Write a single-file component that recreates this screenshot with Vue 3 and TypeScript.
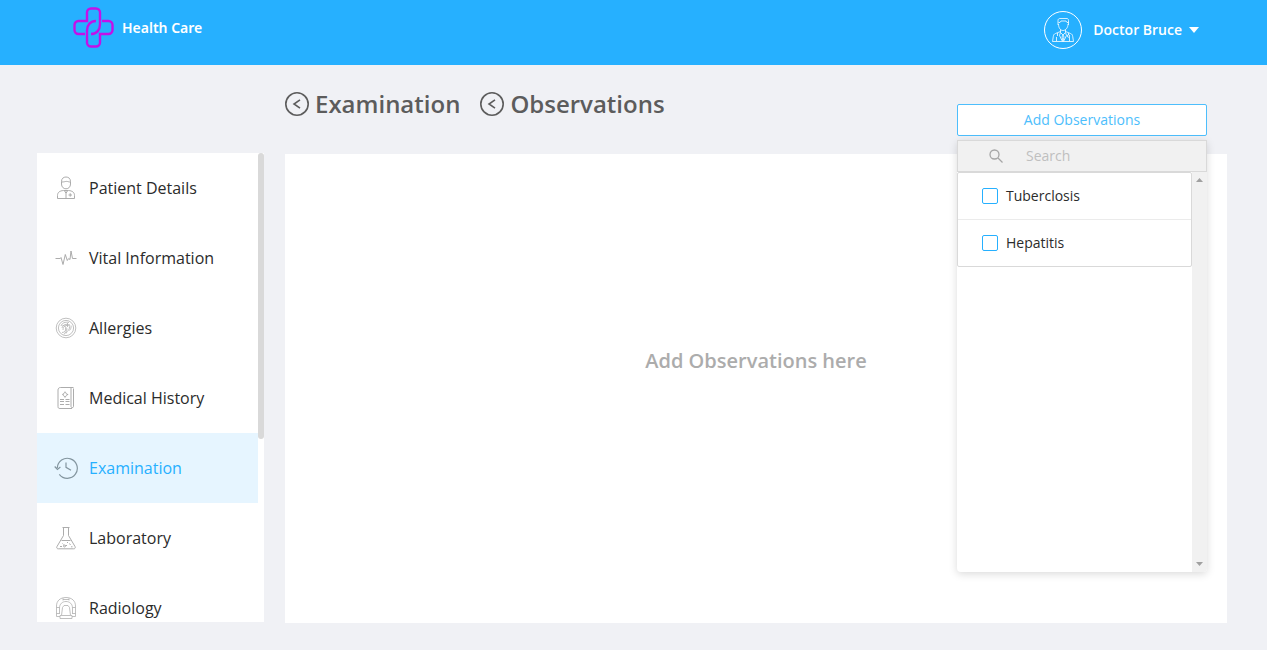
<script setup lang="ts">
import { ref } from 'vue'

interface MenuItem {
  id: string
  label: string
}

const menu: MenuItem[] = [
  { id: 'patient', label: 'Patient Details' },
  { id: 'vital', label: 'Vital Information' },
  { id: 'allergies', label: 'Allergies' },
  { id: 'history', label: 'Medical History' },
  { id: 'examination', label: 'Examination' },
  { id: 'laboratory', label: 'Laboratory' },
  { id: 'radiology', label: 'Radiology' },
]
const active = ref('examination')
const crumbs: string[] = ['Examination', 'Observations']
const observations: string[] = ['Tuberclosis', 'Hepatitis']
const selected = ref<string[]>([])
const search = ref('')
const open = ref(true)
</script>

<template>
  <div class="page">
    <header class="topbar">
      <a class="brand" href="#">
        <svg class="brand-mark" viewBox="0 0 41 41" aria-hidden="true">
          <path d="M12 27H5.500a4 4 0 0 1-4-4V18a4 4 0 0 1 4-4H14V5.500a4 4 0 0 1 4-4h5a4 4 0 0 1 4 4V17.500C27 23 23.500 27 18 27" />
          <path d="M12 27H5.500a4 4 0 0 1-4-4V18a4 4 0 0 1 4-4H14V5.500a4 4 0 0 1 4-4h5a4 4 0 0 1 4 4V17.500C27 23 23.500 27 18 27" transform="rotate(180 20.500 20.500)" />
        </svg>
        <span>Health Care</span>
      </a>
      <button class="user" type="button">
        <svg class="avatar" viewBox="0 0 38 38" aria-hidden="true">
          <circle cx="19" cy="19" r="18.500" />
          <g class="thin">
            <path d="M14 14V9.500c0-1.500 1-2 2-2h7c1 0 1.500 1 1.500 2V14M14.500 11.500h1.500l1-1.500h5l1 1.500h1.500M14.500 13c0 4 2 6.500 4.500 6.500s5-2.500 5-6.500M16.500 18.500v3L19 24l2.500-2.500v-3" />
            <path d="M16.500 20.500l-5 2c-1.500.5-2 1.500-2.200 3L8.500 30.500h21l-.8-5c-.2-1.500-.7-2.500-2.200-3l-5-2M16.500 21.500l-1 3 3 6M21.500 21.500l1 3-3 6M19 24l-1 2 1 4 1-4zM12.500 30v-4M25.500 30v-4M13.500 22v3M24.500 22v2" />
            <circle cx="24.500" cy="25" r="1.200" />
          </g>
        </svg>
        <span>Doctor Bruce</span>
        <svg class="caret" viewBox="0 0 10 6" aria-hidden="true"><path d="M0 0h10L5 6z" /></svg>
      </button>
    </header>

    <div class="layout">
      <nav class="sidebar" aria-label="Patient record">
        <ul class="menu">
          <li v-for="item in menu" :key="item.id">
            <a href="#" class="menu-link" :class="{ active: item.id === active }" @click.prevent="active = item.id">
              <svg class="icon" :class="item.id" viewBox="0 0 24 24" aria-hidden="true">
                <g v-if="item.id === 'patient'">
                  <path d="M7.500 5.500c0-3 2-4.500 4.500-4.500s4.500 1.500 4.500 4.500V8c0 3-2 4.800-4.500 4.800S7.500 11 7.500 8zM7.500 6c3 0 3.500-.6 5-.6s2 .6 4 .6" />
                  <path d="M9.500 14.500c-4 .3-6 2-6 5v3h17v-3c0-3-2-4.700-6-5M9.500 14.500h5M12 15.500v7M10.500 15l1.500 2 1.500-2M16.200 17.200v3.500M14.500 19H18" />
                </g>
                <path v-else-if="item.id === 'vital'" d="M1.500 12.500h4.800L7 11.500l2 7 2.300-10 2 6 1.400-2 1.300 1 1-8.500 1.500 7.500h4" />
                <g v-else-if="item.id === 'allergies'">
                  <circle cx="12" cy="12" r="9.800" />
                  <circle cx="12" cy="12" r="7.600" />
                  <path d="M7 10c1-3 4-4.500 8-3.500M8 12c1-3.500 4-4.500 8-3M9 14c0-4 3-5.500 7-4M12 17.500c1-3 4-3 3.500-7M10 18.500c1-2 3-3 3-6M8.500 9.500c2 0 4 1 3 4M8 16.500c3 0 4-2 4-5M13.500 7v4M15.500 14.500c1-1 2-3 1.500-5" />
                </g>
                <g v-else-if="item.id === 'history'">
                  <path d="M6.500 1.500h13M6.500 1.500c-1.500 0-2.500 1-2.500 2.500v16.500M17 2v18.500c0 1.500 2.500 1.500 2.500 0V2.500M4 20.500c0 1.500.7 2 2 2h12" />
                  <path d="M11 5.500v1.200c-1 0-1.700.7-1.700 1.700H8.200M11 6.700c1.200 0 2 .8 2 1.800s-.8 2-2 2-1.800-.8-1.800-2M11 10.500v1.200M13 8.500h1.200M6 13.500h4M11.500 13.500h4M6 15.500h4M11.500 15.500h4M6 18.500h4M11.500 18.500h4" />
                </g>
                <g v-else-if="item.id === 'examination'">
                  <path d="M3.300 12a10 10 0 1 1 2 6.300M.7 10.500l2.700 3 3-2.500M12 6.500v4.800l5 3" />
                </g>
                <g v-else-if="item.id === 'laboratory'">
                  <path d="M8.500 1.500h7M9.500 2v7.500L3 20.500c-.7 1.300 0 2.300 1.300 2.300h15.400c1.300 0 2-1 1.300-2.300L14.500 9.500V2" />
                  <path d="M7.500 14.500h9M8.500 17.500l1 1M13 16.500h1M11.500 19.500h1.500M6 20.500h2M15.500 17.500l1 1.500M17 20.800h1.500" />
                  <circle cx="10.500" cy="20" r="1" />
                </g>
                <g v-else>
                  <path d="M6 20.500H2.500V10C2.500 5 6 1.500 12 1.500S21.500 5 21.500 10v10.500H18M2.500 11.500h3M18.500 11.500h3M2.500 17.500h3M18.500 17.500h3" />
                  <path d="M5.500 18v-6c0-4 2.800-6.500 6.500-6.500s6.500 2.500 6.500 6.500v6M9 4.500V2.200M15 4.500V2.200M9 3.500h6" />
                  <path d="M8.500 11.500l1.500-2h4l1.500 2 1 8H18v3H6v-3h1.500zM7.500 19.500h9" />
                </g>
              </svg>
              <span>{{ item.label }}</span>
            </a>
          </li>
        </ul>
        <div class="track"><div class="thumb"></div></div>
      </nav>

      <main class="content">
        <div class="toolbar">
          <div class="crumbs">
            <h1 v-for="crumb in crumbs" :key="crumb" class="crumb">
              <a href="#">
                <svg viewBox="0 0 24 24" aria-hidden="true">
                  <circle cx="12" cy="12" r="11.200" />
                  <path d="M15 7.800L9 12l6 4.200" />
                </svg>
                <span>{{ crumb }}</span>
              </a>
            </h1>
          </div>

          <div class="picker">
            <button class="add" type="button" :aria-expanded="open" @click="open = !open">Add Observations</button>
            <div v-if="open" class="dropdown">
              <label class="search">
                <svg viewBox="0 0 14 14" aria-hidden="true">
                  <circle cx="5.500" cy="5.500" r="4.500" />
                  <path d="M9 9l4.500 4.500" />
                </svg>
                <input v-model="search" type="text" placeholder="Search" aria-label="Search" />
              </label>
              <div class="results">
                <ul class="options">
                  <li v-for="name in observations" :key="name">
                    <label class="option">
                      <input v-model="selected" type="checkbox" :value="name" />
                      <span>{{ name }}</span>
                    </label>
                  </li>
                </ul>
                <div class="gutter">
                  <svg viewBox="0 0 7 4" aria-hidden="true"><path d="M0 4L3.500 0 7 4z" /></svg>
                  <svg viewBox="0 0 7 4" aria-hidden="true"><path d="M0 0L3.500 4 7 0z" /></svg>
                </div>
              </div>
            </div>
          </div>
        </div>

        <section class="panel">
          <p>Add Observations here</p>
        </section>
      </main>
    </div>
  </div>
</template>

<style>
body {
  margin: 0;
  background: #f0f1f5;
}
</style>

<style scoped>
* {
  box-sizing: border-box;
}
.page {
  min-height: 100vh;
  background: #f0f1f5;
  color: #2b2b2b;
  font-family: 'Open Sans', 'Noto Sans', sans-serif;
  font-size: 14px;
  line-height: 20px;
}
a {
  color: inherit;
  text-decoration: none;
}
button,
input {
  font: inherit;
}
ul {
  list-style: none;
  margin: 0;
  padding: 0;
}
svg {
  display: block;
  flex: none;
  fill: none;
  stroke: currentColor;
}
.topbar {
  display: flex;
  justify-content: space-between;
  align-items: flex-start;
  height: 65px;
  padding: 7px 68px 0 73px;
  background: #26b0ff;
  color: #fff;
}
.brand {
  display: flex;
  align-items: center;
  gap: 8px;
  font-family: 'Noto Sans', sans-serif;
  font-size: 14px;
  font-weight: 600;
}
.brand-mark {
  width: 41px;
  height: 41px;
  stroke: #c410e8;
  stroke-width: 2.400;
}
.user {
  display: flex;
  align-items: center;
  margin-top: 4px;
  padding: 0;
  border: 0;
  background: none;
  color: inherit;
  font-weight: 600;
  cursor: pointer;
}
.avatar {
  width: 38px;
  height: 38px;
  margin-right: 11px;
}
.avatar .thin {
  stroke-width: 0.800;
}
.caret {
  width: 10px;
  height: 6px;
  margin-left: 7px;
  fill: #fff;
  stroke: none;
}
.layout {
  display: grid;
  grid-template-columns: 227px 1fr;
  gap: 21px;
  padding: 0 40px 0 37px;
}
.sidebar {
  display: grid;
  grid-template-columns: 1fr 6px;
  height: calc(100vh - 181px);
  margin-top: 88px;
  overflow: hidden;
  background: #fff;
}
.menu-link {
  display: flex;
  align-items: center;
  gap: 11px;
  height: 70px;
  padding-left: 17px;
  font-size: 16px;
}
.menu-link.active {
  background: #e6f5ff;
  color: #26b0ff;
}
.icon {
  width: 24px;
  height: 24px;
  color: #a3a3a3;
  stroke-width: 0.900;
}
.icon.allergies,
.icon.radiology {
  color: #b0b0b0;
  stroke-width: 0.800;
}
.icon.examination {
  color: #83959f;
  stroke-width: 1.200;
}
.track {
  height: calc(100vh - 181px);
}
.thumb {
  height: 61%;
  border-radius: 3px;
  background: #d9d9d9;
}
.toolbar {
  display: flex;
  justify-content: space-between;
  align-items: flex-start;
  height: 89px;
}
.crumbs {
  display: flex;
  gap: 20px;
  padding-top: 22px;
}
.crumb {
  margin: 0;
  color: #5c5c5c;
  font-size: 24px;
  font-weight: 600;
  line-height: 34px;
}
.crumb a {
  display: flex;
  align-items: center;
  gap: 6px;
}
.crumb svg {
  width: 24px;
  height: 24px;
  stroke-width: 1.600;
}
.picker {
  position: relative;
  width: 250px;
  margin: 39px 20px 0 0;
}
.add {
  display: block;
  width: 100%;
  height: 32px;
  padding: 0;
  border: 1px solid #4dbefc;
  border-radius: 2px;
  background: #fff;
  color: #4dbefc;
  cursor: pointer;
}
.dropdown {
  position: absolute;
  z-index: 1;
  top: 36px;
  left: 0;
  width: 100%;
  border-radius: 4px;
  background: #fff;
  box-shadow: 0 2px 8px rgba(0, 0, 0, 0.15);
}
.search {
  display: flex;
  align-items: center;
  gap: 23px;
  height: 32px;
  padding-left: 31px;
  border: 1px solid #d9d9d9;
  background: #f1f1f1;
}
.search svg {
  width: 14px;
  height: 14px;
  color: #a6a6a6;
  stroke-width: 1.300;
}
.search input {
  flex: 1;
  min-width: 0;
  height: 20px;
  padding: 0;
  border: 0;
  outline: 0;
  background: none;
}
.search input::placeholder {
  color: #bfbfbf;
  opacity: 1;
}
.results {
  display: grid;
  grid-template-columns: 1fr 15px;
  height: 400px;
}
.options {
  align-self: start;
  border: 1px solid #d9d9d9;
  border-radius: 2px;
}
.options li + li {
  border-top: 1px solid #ebebeb;
}
.option {
  display: flex;
  align-items: center;
  gap: 8px;
  height: 46px;
  padding-left: 24px;
}
.option input {
  appearance: none;
  width: 16px;
  height: 16px;
  margin: 0;
  border: 1px solid #26b0ff;
  border-radius: 2px;
  background: #fff;
}
.option input:checked {
  background: #26b0ff;
}
.gutter {
  display: flex;
  flex-direction: column;
  justify-content: space-between;
  align-items: center;
  padding: 6px 0;
  border-radius: 0 0 4px 0;
  background: #f1f1f1;
}
.gutter svg {
  width: 7px;
  height: 4px;
  fill: #a0a0a0;
  stroke: none;
}
.panel {
  display: grid;
  place-content: start center;
  height: calc(100vh - 181px);
  padding-top: 192px;
  background: #fff;
}
.panel p {
  margin: 0;
  color: #acacac;
  font-size: 20px;
  font-weight: 600;
  line-height: 30px;
}
</style>
